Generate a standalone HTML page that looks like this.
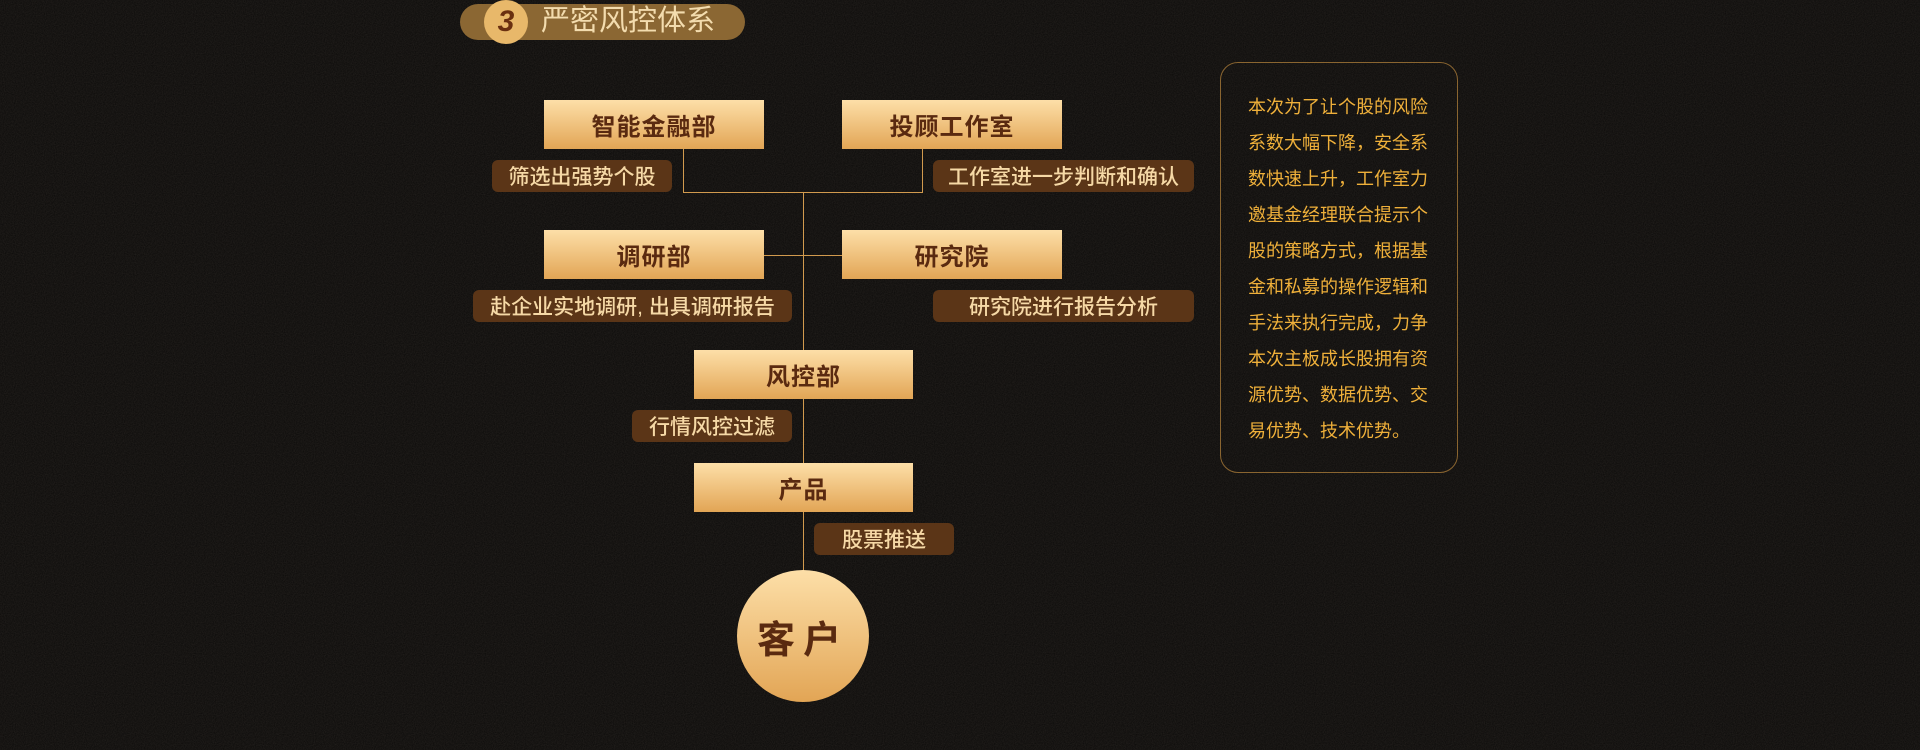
<!DOCTYPE html>
<html><head><meta charset="utf-8"><style>
body{margin:0;width:1920px;height:750px;background:#0a0908;position:relative;overflow:hidden;font-family:"Liberation Sans","Noto Sans CJK SC",sans-serif}
.a{position:absolute}
.box{position:absolute;background:linear-gradient(#fddfa8,#e2a555);color:#5a2a10;font-size:24px;font-weight:bold;display:flex;align-items:center;justify-content:center;letter-spacing:1px}
.lb{position:absolute;background:#5b3517;color:#f6d9a6;font-size:21px;font-weight:500;border-radius:6px;display:flex;align-items:center;justify-content:center}
.ln{position:absolute;background:#d19a4e}
</style></head><body>
<svg class="a" style="left:0;top:0" width="1920" height="750"><filter id="n"><feTurbulence type="fractalNoise" baseFrequency="0.9" numOctaves="2"/><feColorMatrix values="0 0 0 0 0.22 0 0 0 0 0.18 0 0 0 0 0.15 0 0 0 0.22 0"/></filter><rect width="1920" height="750" filter="url(#n)"/></svg>
<div class="a" style="left:460px;top:4px;width:285px;height:36px;border-radius:18px;background:#8b6733"></div>
<div class="a" style="left:484px;top:0;width:44px;height:44px;border-radius:50%;background:#e8b86a;color:#6a3010;font-size:30px;font-weight:bold;font-style:italic;text-align:center;line-height:44px">3</div>
<div class="a" style="left:541px;top:2px;font-size:29px;color:#f3dcae;line-height:38px">严密风控体系</div>

<div class="ln" style="left:683px;top:149px;width:1px;height:43px"></div>
<div class="ln" style="left:922px;top:149px;width:1px;height:43px"></div>
<div class="ln" style="left:683px;top:192px;width:240px;height:1px"></div>
<div class="ln" style="left:803px;top:192px;width:1px;height:380px"></div>
<div class="ln" style="left:764px;top:255px;width:78px;height:1px"></div>

<div class="box" style="left:544px;top:100px;width:220px;height:49px">智能金融部</div>
<div class="box" style="left:842px;top:100px;width:220px;height:49px">投顾工作室</div>
<div class="lb" style="left:492px;top:160px;width:180px;height:32px">筛选出强势个股</div>
<div class="lb" style="left:933px;top:160px;width:261px;height:32px">工作室进一步判断和确认</div>
<div class="box" style="left:544px;top:230px;width:220px;height:49px">调研部</div>
<div class="box" style="left:842px;top:230px;width:220px;height:49px">研究院</div>
<div class="lb" style="left:473px;top:290px;width:319px;height:32px">赴企业实地调研, 出具调研报告</div>
<div class="lb" style="left:933px;top:290px;width:261px;height:32px">研究院进行报告分析</div>
<div class="box" style="left:694px;top:350px;width:219px;height:49px">风控部</div>
<div class="lb" style="left:632px;top:410px;width:160px;height:32px">行情风控过滤</div>
<div class="box" style="left:694px;top:463px;width:219px;height:49px">产品</div>
<div class="lb" style="left:814px;top:523px;width:140px;height:32px">股票推送</div>
<div class="box" style="left:737px;top:570px;width:132px;height:132px;border-radius:50%;font-size:38px;letter-spacing:8px">客户</div>

<div class="a" style="left:1220px;top:62px;width:236px;height:409px;border:1px solid #8a6530;border-radius:18px"></div>
<div class="a" style="left:1248px;top:89px;width:200px;font-size:18px;line-height:36px;color:#efb03a;white-space:nowrap">本次为了让个股的风险<br>系数大幅下降，安全系<br>数快速上升，工作室力<br>邀基金经理联合提示个<br>股的策略方式，根据基<br>金和私募的操作逻辑和<br>手法来执行完成，力争<br>本次主板成长股拥有资<br>源优势、数据优势、交<br>易优势、技术优势。</div>
</body></html>
